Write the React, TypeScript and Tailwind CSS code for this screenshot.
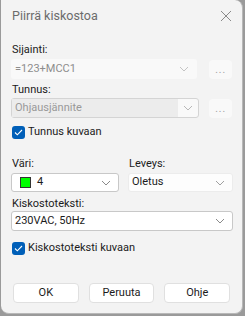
import React from "react";

const font = { fontFamily: 'Roboto, "Noto Sans", sans-serif' };

function Chevron({ color = "#8a8a8a" }: { color?: string }) {
  return (
    <svg width="10" height="6" viewBox="0 0 10 6" className="shrink-0">
      <path d="M1 1 L5 5 L9 1" fill="none" stroke={color} strokeWidth="1" />
    </svg>
  );
}

function Check() {
  return (
    <span className="flex h-[13px] w-[13px] shrink-0 items-center justify-center rounded-[3px] bg-[#005fb8]">
      <svg width="9" height="7" viewBox="0 0 9 7">
        <path d="M1 3.5 L3.3 5.8 L8 1" fill="none" stroke="#ffffff" strokeWidth="1.1" />
      </svg>
    </span>
  );
}

function DotsButton() {
  return (
    <div className="flex h-[19px] w-[23px] items-end justify-center rounded-[4px] bg-[#f9f9f9] pb-[4px] text-[10px] leading-none tracking-[1px] text-[#a0a0a0]">
      ...
    </div>
  );
}

export default function App() {
  return (
    <div className="h-[316px] w-[245px] bg-[#9a9a9a]" style={font}>
      <div className="ml-[1px] flex h-[314px] w-[242px] flex-col rounded-b-lg rounded-tr-lg border-r border-b border-[#b8b8b8] bg-[#f3f3f3]">
        <div className="flex h-[32px] items-center justify-between pl-[11px] pr-[10px]">
          <span className="text-[12.5px] text-[#6b6b6b]">Piirrä kiskostoa</span>
          <svg width="12" height="12" viewBox="0 0 12 12">
            <path d="M1 1 L11 11 M11 1 L1 11" stroke="#8a8a8a" strokeWidth="1" />
          </svg>
        </div>

        <div className="flex flex-col px-[10px] pt-[11px] text-[11px] text-[#1b1b1b]">
          <span className="pl-[1px] leading-[14px]">Sijainti:</span>
          <div className="mt-[2px] flex items-center gap-[12px]">
            <div className="flex h-[20px] w-[188px] items-center justify-between rounded-[3px] bg-[#f9f9f9] pl-[4px] pr-[8px] text-[#8d8d8d]">
              <span>=123+MCC1</span>
              <Chevron color="#c4c4c4" />
            </div>
            <DotsButton />
          </div>

          <span className="mt-[4px] pl-[1px] leading-[14px]">Tunnus:</span>
          <div className="mt-[1px] flex items-center gap-[10px]">
            <div className="flex h-[20px] w-[190px] items-center rounded-[3px] border border-[#d4d4d4] bg-[#f9f9f9]">
              <span className="flex h-full flex-1 items-center bg-[#ececec] pl-[3px] text-[#999999]">Ohjausjännite</span>
              <span className="flex w-[20px] justify-center">
                <Chevron color="#b8b8b8" />
              </span>
            </div>
            <DotsButton />
          </div>

          <div className="mt-[7px] flex items-center gap-[3px] pl-[1px]">
            <Check />
            <span className="leading-[14px]">Tunnus kuvaan</span>
          </div>

          <div className="mt-[18px] grid grid-cols-[108px_105px] gap-x-[9px]">
            <span className="pl-[1px] leading-[14px]">Väri:</span>
            <span className="pl-[1px] leading-[14px]">Leveys:</span>
            <div className="mt-[2px] flex h-[19px] items-center justify-between rounded-[3px] border border-[#c8c8c8] bg-white pl-[8px] pr-[7px]">
              <span className="flex items-center gap-[6px]">
                <span className="h-[11px] w-[11px] border border-[#333333] bg-[#00ff00]" />
                <span>4</span>
              </span>
              <Chevron />
            </div>
            <div className="mt-[2px] flex h-[19px] items-center justify-between rounded-[3px] border border-[#ececec] bg-[#fdfdfd] pl-[3px] pr-[7px]">
              <span>Oletus</span>
              <Chevron color="#a0a0a0" />
            </div>
          </div>

          <span className="mt-[5px] pl-[1px] leading-[14px]">Kiskostoteksti:</span>
          <div className="flex h-[20px] w-[222px] items-center justify-between rounded-[3px] border border-[#c8c8c8] bg-white pl-[3px] pr-[7px]">
            <span>230VAC, 50Hz</span>
            <Chevron />
          </div>

          <div className="mt-[10px] flex items-center gap-[3px] pl-[1px]">
            <Check />
            <span className="leading-[14px]">Kiskostoteksti kuvaan</span>
          </div>
        </div>

        <div className="mt-auto mb-[10px] flex gap-[10px] px-[12px] text-[11px] text-[#1b1b1b]">
          <button className="h-[20px] w-[67px] rounded-[4px] border border-[#e0e0e0] bg-white">OK</button>
          <button className="h-[20px] w-[67px] rounded-[4px] border border-[#e0e0e0] bg-white">Peruuta</button>
          <button className="h-[20px] w-[67px] rounded-[4px] border border-[#e0e0e0] bg-white">Ohje</button>
        </div>
      </div>
    </div>
  );
}
